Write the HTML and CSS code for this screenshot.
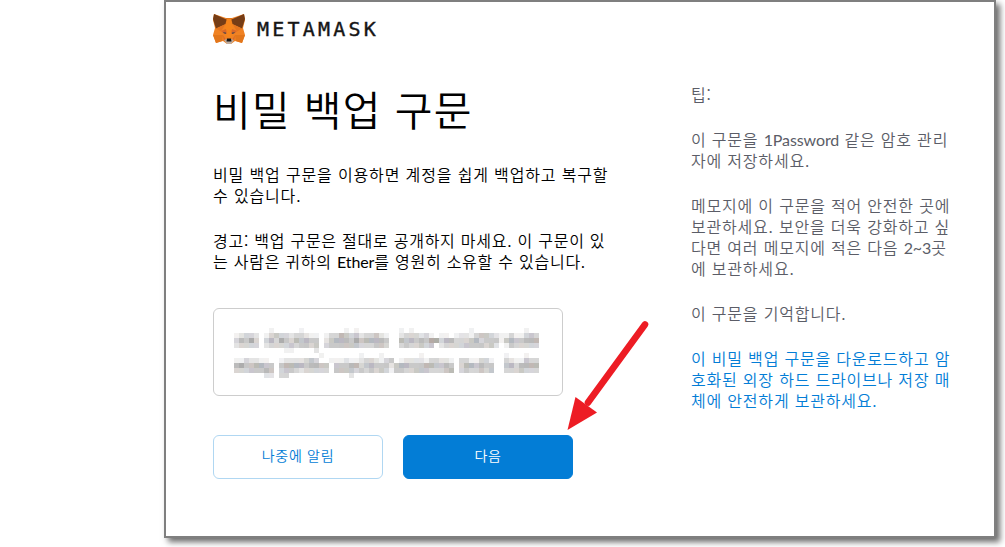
FILE: index.html
```html
<!DOCTYPE html>
<html lang="ko">
<head>
    <meta charset="UTF-8">
    <meta name="viewport" content="width=device-width, initial-scale=1.0">
    <title>MetaMask</title>
    <link rel="stylesheet" href="styles.css">
</head>
<body>

    <div class="window">
        <header class="logo">
            <svg class="fox" viewBox="0 0 32 30" width="32" height="30">
                <path fill="#f08223" d="M1 0l12 4h6l12-4 1 6-2 8 2 7-3 8-7-2-4 3h-4l-4-3-7 2-3-8 2-7-2-8z"/>
                <path fill="#e2761b" d="M13 4h6l-1 18h-4zM0 21h10l-1 6-6 2zM32 21H22l1 6 6 2z"/>
                <path fill="#f6851b" d="M14 5h4l3 12-3 6h-4l-3-6z"/>
                <path fill="#763d16" d="M1 0l12.500 5.500L12.500 10 3 14.500 0 5zM31 0L18.500 5.500l1 4.500 9.500 4.500L32 5z"/>
                <path fill="#e4751f" d="M3 14.500l9-4-4 7zM29 14.500l-9-4 4 7z"/>
                <path fill="#d9682a" d="M8 17l5-2 1 5-4-1zM24 17l-5-2-1 5 4-1zM10 21l3 5-2 1zM22 21l-3 5 2 1z"/>
                <path fill="#5d4a48" d="M10 18l3 .5v1.500l-2-.5zM22 18l-3 .5v1.500l2-.5z"/>
                <path fill="#c0ad9e" d="M11 26l3-1h4l3 1-3 4h-4z"/>
                <path fill="#161616" d="M14 24.500h4l.5 3h-5z"/>
            </svg>
            <span class="brand">METAMASK</span>
        </header>

        <div class="content">
            <main class="main">
                <h1>비밀 백업 구문</h1>
                <p>비밀 백업 구문을 이용하면 계정을 쉽게 백업하고 복구할<br>수 있습니다.</p>
                <p class="warning">경고: 백업 구문은 절대로 공개하지 마세요. 이 구문이 있<br>는 사람은 귀하의 <span class="latin">Ether</span>를 영원히 소유할 수 있습니다.</p>

                <div class="phrase">
                    <svg id="mosaic" width="310" height="50" shape-rendering="crispEdges"></svg>
                </div>

                <div class="buttons">
                    <button class="btn">나중에 알림</button>
                    <button class="btn btn-primary">다음</button>
                </div>
            </main>

            <aside class="tips">
                <p>팁:</p>
                <p>이 구문을 <span class="latin">1Password</span> 같은 암호 관리<br>자에 저장하세요.</p>
                <p>메모지에 이 구문을 적어 안전한 곳에<br>보관하세요. 보안을 더욱 강화하고 싶<br>다면 여러 메모지에 적은 다음 <span class="latin">2~3</span>곳<br>에 보관하세요.</p>
                <p>이 구문을 기억합니다.</p>
                <p><a href="#">이 비밀 백업 구문을 다운로드하고 암<br>호화된 외장 하드 드라이브나 저장 매<br>체에 안전하게 보관하세요.</a></p>
            </aside>
        </div>
    </div>

    <svg class="arrow" viewBox="0 0 90 116" width="90" height="116">
        <path d="M80 9.500L23 87.500" stroke="#ed1c24" stroke-width="6.600" stroke-linecap="round"/>
        <path d="M2.500 115l8-33 21.500 15.500z" fill="#ed1c24"/>
    </svg>

    <script>
        // Hidden phrase: one digit per 5px block, 0 is white and 9 is the darkest
        const rows = [
            '00000001000001000000001010000000010100000000000100000000001000',
            '12332013433233211013354342334210023332310110122134432113113430',
            '35463035364354544024555464555540054545466355333453444145445550',
            '23333023333434434034444443334430034334340233334444342014333330',
            '00000000001100002000000000000000000000000000000000000000000000',
            '00000000000000000100000001000100000001000000000000000010001000',
            '11322110012222343001112112332134012222133221033113310032114330',
            '56445544045555455440444553454442455444554454035545440045355550',
            '33344454034432333330444434343431443344433345034334340033343330',
            '00000022033000000000000200000000000000000000000000000000000000'
        ];
        const tints = ['#999', '#8f96a0', '#a2958e', '#999', '#9995a3', '#999990', '#969696'];
        let blocks = '';
        rows.forEach((row, y) => {
            [...row].forEach((level, x) => {
                if (level > 0) {
                    blocks += `<rect x="${x * 5}" y="${y * 5}" width="5" height="5" fill="${tints[(x * 3 + y * 2) % 7]}" opacity="${level / 7.5}"/>`;
                }
            });
        });
        document.getElementById('mosaic').innerHTML = blocks;
    </script>

</body>
</html>
```
FILE: styles.css
```css
* {
    box-sizing: border-box;
}

body {
    margin: 0;
    height: 547px;
    padding-left: 164px;
    overflow: hidden;
    background: #fff;
    color: #000;
    font-family: "Noto Sans CJK KR", sans-serif;
    font-weight: 350;
    font-size: 16px;
    line-height: 21px;
    letter-spacing: 0.85px;
}

.window {
    width: 832px;
    height: 538px;
    padding: 12px 0 0 47px;
    border: 2px solid #7f7f7f;
    background: #fff;
    box-shadow: 4px 4px 6px #6c6c6c;
}

.logo {
    display: flex;
    align-items: center;
    gap: 12px;
    height: 30px;
}

.brand {
    font-family: "DejaVu Sans Mono", monospace;
    font-weight: 400;
    font-size: 20px;
    line-height: 30px;
    letter-spacing: 3.2px;
    color: #161616;
    -webkit-text-stroke: 0.4px #161616;
}

.latin {
    font-family: Lato, sans-serif;
    font-weight: 400;
    letter-spacing: -0.1px;
}

.content {
    display: flex;
}

.main {
    width: 478px;
    padding-top: 38px;
    white-space: nowrap;
}

h1 {
    margin: 0 0 29px;
    font-size: 41px;
    font-weight: 350;
    line-height: 53px;
    letter-spacing: 1.3px;
}

p {
    margin: 0 0 24px;
}

.warning {
    letter-spacing: 0.75px;
}

.phrase {
    width: 350px;
    height: 88px;
    margin-top: 36px;
    padding: 19px 20px;
    border: 1px solid #cdcdcd;
    border-radius: 6px;
}

.phrase svg {
    display: block;
}

.buttons {
    display: flex;
    gap: 20px;
    margin-top: 39px;
}

.btn {
    width: 170px;
    height: 44px;
    padding: 0 0 4px;
    border: 1px solid #b0d7f2;
    border-radius: 6px;
    background: #fff;
    color: #037dd6;
    font-family: inherit;
    font-size: 14px;
    font-weight: 350;
    letter-spacing: 0.7px;
}

.btn-primary {
    border-color: #037dd6;
    background: #037dd6;
    color: #fff;
}

.tips {
    padding-top: 40px;
    color: #5b5d67;
    white-space: nowrap;
    letter-spacing: 0.8px;
}

.tips a {
    color: #037dd6;
    text-decoration: none;
}

/* pointer drawn over the form, its tip on the next button */
.arrow {
    position: absolute;
    left: 565px;
    top: 315px;
}
```
